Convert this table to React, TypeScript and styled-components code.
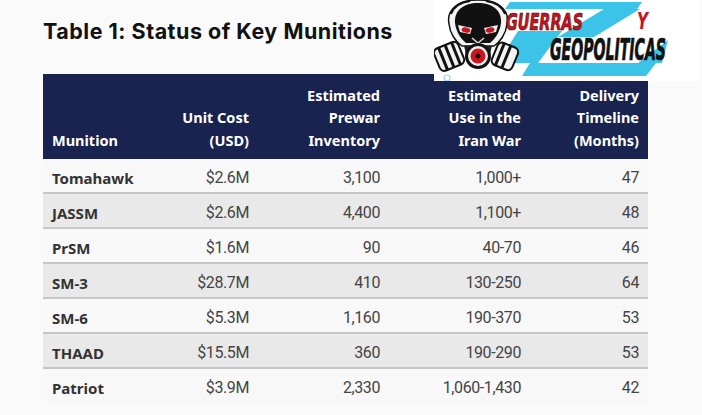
import { createGlobalStyle, styled } from "styled-components";

type Munition = {
  name: string;
  cost: string;
  inventory: string;
  used: string;
  months: string;
};

const munitions: Munition[] = [
  { name: "Tomahawk", cost: "$2.6M", inventory: "3,100", used: "1,000+", months: "47" },
  { name: "JASSM", cost: "$2.6M", inventory: "4,400", used: "1,100+", months: "48" },
  { name: "PrSM", cost: "$1.6M", inventory: "90", used: "40-70", months: "46" },
  { name: "SM-3", cost: "$28.7M", inventory: "410", used: "130-250", months: "64" },
  { name: "SM-6", cost: "$5.3M", inventory: "1,160", used: "190-370", months: "53" },
  { name: "THAAD", cost: "$15.5M", inventory: "360", used: "190-290", months: "53" },
  { name: "Patriot", cost: "$3.9M", inventory: "2,330", used: "1,060-1,430", months: "42" },
];

const headers = [
  ["Munition"],
  ["Unit Cost", "(USD)"],
  ["Estimated", "Prewar", "Inventory"],
  ["Estimated", "Use in the", "Iran War"],
  ["Delivery", "Timeline", "(Months)"],
];

const wordFont = "'DejaVu Sans Condensed', 'DejaVu Sans', sans-serif";

const Logo = () => (
  <LogoBox>
    <svg width="266" height="81" viewBox="0 0 266 81">
      {/* cyan Z stripes */}
      <polygon points="76,2 208,2 203,9 71,9" fill="#3cc3e8" />
      <polygon points="170,9 206,9 160,37 124,37" fill="#3cc3e8" />
      <polygon points="84,31 128,31 104,63 64,63" fill="#3cc3e8" />
      <polygon points="96,63 222,63 212,76 88,76" fill="#3cc3e8" />
      <polygon points="204,63 234,40 228,63" fill="#3cc3e8" />
      {/* gas mask skull */}
      <path
        d="M15,24 C12,8 26,0 44,0 C62,0 76,8 73,24 C72,34 66,42 60,46 L28,46 C22,42 16,34 15,24 Z"
        fill="#f4f4f4"
        stroke="#111"
        strokeWidth="1.5"
      />
      <path
        d="M21,23 C20,10 30,3 44,3 C58,3 68,10 67,23 C66,32 61,39 56,43 L32,43 C27,39 22,32 21,23 Z"
        fill="#111"
      />
      <path d="M17,14 C20,6 28,2 36,1" fill="none" stroke="#111" strokeWidth="2" />
      <path d="M71,14 C68,6 60,2 52,1" fill="none" stroke="#111" strokeWidth="2" />
      <path d="M24,25 L38,28 L36,34 L26,32 Z" fill="#eee" />
      <path d="M64,25 L50,28 L52,34 L62,32 Z" fill="#eee" />
      <ellipse cx="32" cy="30" rx="4.5" ry="2.6" fill="#c8141e" transform="rotate(14 32 30)" />
      <ellipse cx="56" cy="30" rx="4.5" ry="2.6" fill="#c8141e" transform="rotate(-14 56 30)" />
      <path d="M38,38 L44,43 L50,38" fill="none" stroke="#ddd" strokeWidth="1.5" />
      <g transform="rotate(-22 16 56)">
        <rect x="2" y="44" width="26" height="24" rx="5" fill="#f2f2f2" stroke="#111" strokeWidth="2" />
        <rect x="7" y="44" width="3" height="24" fill="#111" />
        <rect x="14" y="44" width="3" height="24" fill="#111" />
        <rect x="21" y="44" width="3" height="24" fill="#111" />
      </g>
      <g transform="rotate(22 70 56)">
        <rect x="60" y="44" width="22" height="24" rx="5" fill="#f2f2f2" stroke="#111" strokeWidth="2" />
        <rect x="64" y="44" width="3" height="24" fill="#111" />
        <rect x="71" y="44" width="3" height="24" fill="#111" />
      </g>
      <path d="M30,46 L58,46 L54,62 L34,62 Z" fill="#222" />
      <circle cx="44" cy="56" r="13" fill="#111" />
      <circle cx="44" cy="56" r="10" fill="#eee" />
      <circle cx="44" cy="56" r="7.5" fill="#d0141e" />
      <circle cx="44" cy="56" r="2.5" fill="#111" />
      <circle cx="13" cy="78" r="3" fill="none" stroke="#9fd4ee" strokeWidth="1.2" />
      {/* wordmark: tall condensed letters, stretched vertically */}
      <text
        transform="translate(72 30) scale(1 1.4)"
        textLength="77"
        lengthAdjust="spacingAndGlyphs"
        fill="#c8141e"
        stroke="#4a0808"
        strokeWidth="0.5"
        fontFamily={wordFont}
        fontWeight="700"
        fontStyle="italic"
        fontSize="17"
      >
        GUERRAS
      </text>
      <text
        transform="translate(203 29) scale(1 1.4)"
        textLength="11"
        lengthAdjust="spacingAndGlyphs"
        fill="#c8141e"
        fontFamily={wordFont}
        fontWeight="700"
        fontStyle="italic"
        fontSize="16"
      >
        Y
      </text>
      <text
        transform="translate(116 60) scale(1 1.85)"
        textLength="116"
        lengthAdjust="spacingAndGlyphs"
        fill="#111"
        stroke="#111"
        strokeWidth="0.4"
        fontFamily={wordFont}
        fontWeight="700"
        fontStyle="italic"
        fontSize="16"
      >
        GEOPOLITICAS
      </text>
    </svg>
  </LogoBox>
);

const App = (): JSX.Element => {
  return (
    <>
      <GlobalStyle />
      <Page>
        <Title>Table 1: Status of Key Munitions</Title>
        <Table>
          <HeaderRow>
            {headers.map((lines, i) => (
              <HeaderCell key={i} $left={i === 0}>
                {lines.map((line) => (
                  <span key={line}>{line}</span>
                ))}
              </HeaderCell>
            ))}
          </HeaderRow>
          {munitions.map((m, i) => (
            <BodyRow key={m.name} $shaded={i % 2 === 1} $last={i === munitions.length - 1}>
              <NameCell>{m.name}</NameCell>
              <ValueCell>{m.cost}</ValueCell>
              <ValueCell>{m.inventory}</ValueCell>
              <ValueCell>{m.used}</ValueCell>
              <ValueCell>{m.months}</ValueCell>
            </BodyRow>
          ))}
        </Table>
        <Logo />
      </Page>
    </>
  );
};

export default App;

const GlobalStyle = createGlobalStyle`
  body {
    margin: 0;
    background-color: #fafafa;
    font-family: "Noto Sans", "Liberation Sans", sans-serif;
  }
`;

const Page = styled.div`
  position: relative;
  width: 702px;
  height: 415px;
  box-sizing: border-box;
  padding: 17px 0 0 43px;
  overflow: hidden;
`;

const Title = styled.h1`
  margin: 0;
  font-family: Inter, "Noto Sans", sans-serif;
  font-size: 21.5px;
  line-height: 28px;
  font-weight: 700;
  color: #111111;
  letter-spacing: 0.5px;
`;

const Table = styled.div`
  width: 605px;
  margin-top: 29px;
`;

const columns = "107px 108px 131px 141px 118px";

const HeaderRow = styled.div`
  display: grid;
  grid-template-columns: ${columns};
  height: 85px;
  box-sizing: border-box;
  padding-bottom: 8px;
  background-color: #18234f;
`;

const HeaderCell = styled.div<{ $left?: boolean }>`
  display: flex;
  flex-direction: column;
  justify-content: flex-end;
  align-items: ${(p) => (p.$left ? "flex-start" : "flex-end")};
  padding: 0 9px;
  color: #ffffff;
  font-size: 14.5px;
  font-weight: 700;
  line-height: 22.5px;
  white-space: nowrap;
`;

const BodyRow = styled.div<{ $shaded?: boolean; $last?: boolean }>`
  display: grid;
  grid-template-columns: ${columns};
  align-items: center;
  height: 35px;
  box-sizing: border-box;
  padding-top: 4px;
  background-color: ${(p) => (p.$shaded ? "#e9e9e9" : "#f8f8f8")};
  border-bottom: 2px solid ${(p) => (p.$last ? "transparent" : "#c6c6c6")};
`;

const NameCell = styled.div`
  padding: 0 9px;
  font-size: 15px;
  font-weight: 700;
  color: #333333;
`;

const ValueCell = styled.div`
  padding: 0 9px;
  text-align: right;
  font-family: Roboto, "Liberation Sans", sans-serif;
  font-size: 16px;
  letter-spacing: -0.4px;
  color: #444444;
`;

const LogoBox = styled.div`
  position: absolute;
  top: 0;
  left: 434px;
  width: 266px;
  height: 81px;
  background-color: #ffffff;
`;
